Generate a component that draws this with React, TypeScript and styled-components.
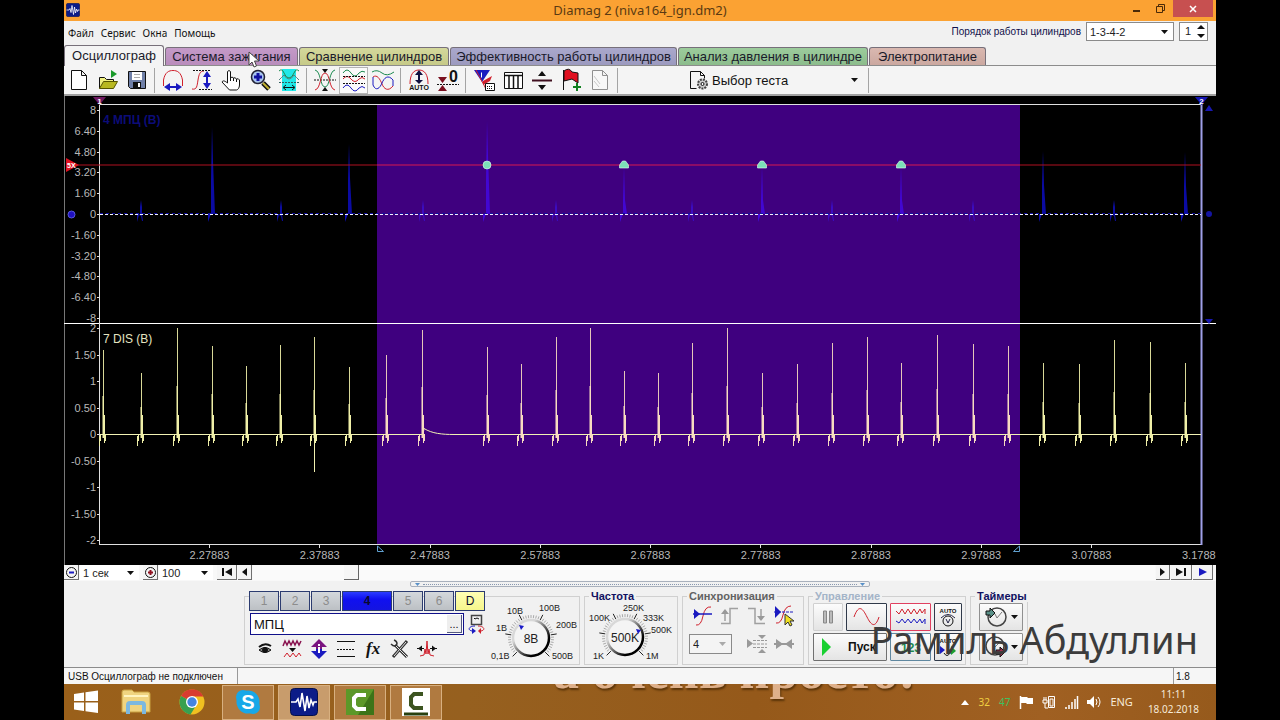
import React from "react";
import styled, { createGlobalStyle } from "styled-components";

const ui = `"Liberation Sans", Arial, sans-serif`;
const tahoma = `"Noto Sans", "Open Sans", sans-serif`;

const GlobalStyle = createGlobalStyle`
  * { box-sizing: border-box; }
  body { margin: 0; background: #000; font-family: ${ui}; font-size: 11px; color: #111; }
  button, input, select { font: inherit; color: inherit; margin: 0; }
  svg { display: block; flex: none; }
`;

const Screen = styled.div`
  position: relative;
  padding: 0 5%;
  background: #000;
`;
const Window = styled.main`
  background: #f1f1f1;
  display: flex;
  flex-direction: column;
`;

/* ---------- title bar ---------- */
const TitleBar = styled.header`
  display: grid;
  grid-template-columns: 1fr auto 1fr;
  height: 21px;
  background: #fba233;
`;
const AppMark = styled.div`
  padding: 3px 2px;
`;
const Title = styled.h1`
  margin: 0;
  font: 13px/21px ${tahoma};
  color: #5a3a12;
`;
const WindowButtons = styled.div`
  display: flex;
  justify-content: flex-end;
  padding-right: 3px;
`;
const WindowButton = styled.button<{ $close?: boolean }>`
  display: flex;
  align-items: center;
  justify-content: center;
  width: ${(p) => (p.$close ? 40 : 24)}px;
  height: 17px;
  padding: 0;
  border: 0;
  background: ${(p) => (p.$close ? "#c75050" : "transparent")};
`;

/* ---------- menu ---------- */
const MenuRow = styled.div`
  display: flex;
  justify-content: space-between;
  height: 24px;
  padding: 0 8px 0 4px;
`;
const Menu = styled.nav`
  display: flex;
  gap: 7px;
`;
const MenuItem = styled.button`
  padding: 0;
  border: 0;
  background: none;
  font: 10px/22px ${tahoma};
`;
const OrderField = styled.div`
  display: flex;
  align-items: flex-start;
  gap: 5px;
  padding-top: 1px;
  color: #10104a;
  line-height: 19px;
  label { font-size: 10px; }
`;
const SelectWrap = styled.div<{ $w: number; $h: number; $plain?: boolean; $muted?: boolean }>`
  position: relative;
  width: ${(p) => p.$w}px;
  height: ${(p) => p.$h}px;
  background: ${(p) => (p.$muted ? "#f4f4f4" : "#fff")};
  border: ${(p) => (p.$plain ? "0" : "1px solid #8a8a8a")};
  color: #222;
  svg { position: absolute; right: 5px; top: calc(50% - 2px); pointer-events: none; }
  select {
    display: block;
    width: 100%;
    height: 100%;
    padding: 0 3px;
    border: 0;
    background: transparent;
    appearance: none;
  }
`;
const Spinner = styled.div`
  display: flex;
  align-items: center;
  width: 29px;
  height: 19px;
  padding: 0 5px;
  background: #fff;
  border: 1px solid #8a8a8a;
  input { width: 12px; padding: 0; border: 0; background: none; color: #222; }
`;

/* ---------- tabs ---------- */
const Tabs = styled.div`
  position: relative;
  display: flex;
  align-items: flex-end;
  gap: 1px;
  height: 21px;
  border-bottom: 1px solid #8c8c8c;
`;
const Tab = styled.button<{ $w: number; $bg: string; $on?: boolean }>`
  width: ${(p) => p.$w}px;
  height: ${(p) => (p.$on ? 21 : 18)}px;
  margin-bottom: ${(p) => (p.$on ? -1 : 0)}px;
  padding: 0;
  border: 1px solid #77707a;
  border-bottom: 0;
  border-radius: 3px 3px 0 0;
  background: ${(p) => p.$bg};
  font-size: 13px;
  line-height: 16px;
  white-space: nowrap;
  color: #1a1a2a;
`;
const Pointer = styled.svg`
  position: absolute;
  left: 184px;
  top: 6px;
`;

/* ---------- toolbar ---------- */
const Toolbar = styled.div`
  display: flex;
  align-items: center;
  height: 30px;
  background: #f4f4f4;
  border-bottom: 2px solid #a0a0a0;
`;
const ToolButton = styled.button<{ $on?: boolean }>`
  display: flex;
  align-items: center;
  justify-content: center;
  width: 29px;
  height: 27px;
  padding: 0;
  border: 1px solid ${(p) => (p.$on ? "#b4b4b4" : "transparent")};
  background: ${(p) => (p.$on ? "#fafafa" : "none")};
`;
const Divider = styled.i`
  width: 1px;
  height: 25px;
  margin: 0 3px;
  background: #a4a4a4;
`;
const TestButton = styled.button`
  display: flex;
  align-items: center;
  gap: 3px;
  width: 180px;
  margin-left: 64px;
  padding: 0 7px 0 4px;
  border: 0;
  background: none;
  font-size: 13px;
  svg:last-child { margin-left: auto; }
`;

const Plot = styled.svg`
  width: 100%;
  height: auto;
  background: #000;
`;

/* ---------- time navigation ---------- */
const NavRow = styled.div`
  display: flex;
  height: 16px;
  gap: 1px;
  background: #f8f8f8;
`;
const NavButton = styled.button<{ $w: number }>`
  display: flex;
  align-items: center;
  justify-content: center;
  width: ${(p) => p.$w}px;
  height: 15px;
  padding: 0;
  border: solid #707070;
  border-width: 0 1px 1px 0;
  background: #f4f4f4;
`;
const Gap = styled.i`
  width: 2px;
`;
const Scroll = styled.input`
  flex: 1;
  min-width: 0;
  height: 15px;
  appearance: none;
  background: #fafafa;
  &::-webkit-slider-thumb {
    appearance: none;
    width: 15px;
    height: 15px;
    background: #f6f6f6;
    border: solid #666;
    border-width: 0 1px 1px 0;
  }
`;
const Splitter = styled.div`
  display: flex;
  align-items: center;
  justify-content: space-between;
  align-self: center;
  width: 40%;
  height: 6px;
  padding: 0 4px;
  border: 1px solid #a8b0bc;
  border-radius: 2px;
  i { flex: 1; margin: 0 3px; border-top: 1px dotted #8898b0; }
`;

/* ---------- control panel ---------- */
const Panels = styled.section`
  display: flex;
  justify-content: center;
  gap: 4px;
  height: 80px;
  padding: 3px 8px 2px 0;
`;
const Group = styled.fieldset<{ $w: number; $tone?: string }>`
  width: ${(p) => p.$w}px;
  min-width: 0;
  margin: 0;
  padding: 0;
  border: 1px solid #d0d0d0;
  legend {
    height: 12px;
    margin-left: 4px;
    padding: 0 2px;
    font-weight: bold;
    line-height: 12px;
    color: ${(p) => p.$tone ?? "#101060"};
  }
`;
const ChannelGroup = styled.section`
  display: flex;
  width: 336px;
  margin-top: 6px;
  border: 1px solid #d0d0d0;
`;
const ChannelColumn = styled.div`
  width: 240px;
  margin-top: -6px;
  padding-left: 4px;
`;
const ChannelButtons = styled.div`
  display: flex;
  gap: 1px;
`;
const ChannelButton = styled.button<{ $tone?: "active" | "d" }>`
  width: ${(p) => (p.$tone === "active" ? 50 : 30)}px;
  height: 20px;
  padding: 0;
  font-size: 12px;
  border: 1px solid #2c3c70;
  font-weight: ${(p) => (p.$tone === "active" ? "bold" : "normal")};
  color: ${(p) => (p.$tone ? "#0a0a30" : "#8c8c8c")};
  background: ${(p) => (p.$tone === "active" ? "linear-gradient(#2a3cff, #1010f0 40%, #1414e0)" : p.$tone === "d" ? "linear-gradient(#ffffb4, #f6f68c)" : "linear-gradient(#d4d8dc, #bcc0c4)")};
`;
const NameRow = styled.div`
  display: flex;
  align-items: center;
  gap: 4px;
  margin: 2px 0 0 1px;
`;
const NameBox = styled.div`
  display: flex;
  width: 217px;
  height: 22px;
  padding: 1px;
  background: #fff;
  border: 1px solid #10108a;
  input { flex: 1; min-width: 0; padding: 0 2px; border: 0; background: none; font-size: 13px; }
  button { width: 15px; padding: 0; border: solid #555a80; border-width: 0 1px 1px 0; background: #eee; line-height: 12px; }
`;
const ChannelTools = styled.div`
  display: flex;
  padding: 1px 0 0 2px;
  button { width: 27px; height: 25px; }
`;
const KnobSlot = styled.div`
  margin-top: -6px;
`;
const SyncGrid = styled.div`
  display: grid;
  grid-template-columns: repeat(4, 27px);
  grid-template-rows: 28px 28px;
  justify-content: center;
  align-items: center;
  justify-items: center;
`;
const IconButton = styled.button`
  padding: 0;
  border: 0;
  background: none;
`;
const SpanTwo = styled.div`
  grid-column: span 2;
  justify-self: start;
`;
const ControlGrid = styled.div`
  display: grid;
  grid-template-columns: 30px 41px 41px 28px;
  grid-auto-rows: 28px;
  column-gap: 3px;
  row-gap: 2px;
  padding: 1px 0 0 4px;
`;
const TimerGrid = styled.div`
  display: grid;
  grid-template-columns: 44px;
  grid-auto-rows: 28px;
  row-gap: 2px;
  padding: 1px 0 0 8px;
`;
const PanelButton = styled.button<{ $edge?: string; $wide?: boolean }>`
  display: flex;
  align-items: center;
  justify-content: ${(p) => (p.$wide ? "flex-start" : "center")};
  gap: ${(p) => (p.$wide ? 16 : 4)}px;
  grid-column: ${(p) => (p.$wide ? "span 2" : "auto")};
  padding: ${(p) => (p.$wide ? "0 0 0 8px" : "0")};
  border: 1px solid ${(p) => p.$edge ?? "#303a4a"};
  border-radius: 1px;
  background: linear-gradient(#fcfcfc, #e4e4e4);
  font-size: 12px;
  font-weight: bold;
`;

/* ---------- status bar ---------- */
const StatusBar = styled.footer`
  display: flex;
  height: 17px;
  border-top: 1px solid #8c8c8c;
  background: #f6f6f6;
  font-size: 10px;
  line-height: 17px;
  span { padding: 0 4px; }
  span:first-child { width: 173px; white-space: nowrap; }
  span:nth-child(2) { flex: 1; border-left: 1px solid #999; }
  span:last-child { width: 43px; padding: 0 2px; border-left: 1px solid #999; }
`;

/* ---------- taskbar ---------- */
const Taskbar = styled.nav`
  position: relative;
  overflow: hidden;
  display: flex;
  align-items: center;
  height: 36px;
  background: linear-gradient(90deg, #9a601a, #96601f 35%, #95591a 60%, #a06022 85%, #965a1c);
`;
const Wallpaper = styled.div`
  position: absolute;
  left: 489px;
  top: -41px;
  font: bold 52px/56px "Liberation Serif", serif;
  color: #deb08a;
  text-shadow: 1px 2px 2px #5a3408;
  white-space: nowrap;
`;
const TaskButton = styled.button<{ $state?: "open" | "front"; $start?: boolean }>`
  display: flex;
  align-items: center;
  justify-content: center;
  width: ${(p) => (p.$start ? 44 : 52)}px;
  height: 35px;
  margin: 0 ${(p) => (p.$start ? 0 : 2)}px;
  padding: 0;
  border: ${(p) => (p.$state ? "1px solid #d8b080" : "0")};
  background: ${(p) => (p.$state === "front" ? "#c89c6c" : p.$state ? "#b07a40" : "none")};
`;
const Tray = styled.div`
  display: flex;
  align-items: center;
  gap: 9px;
  margin-left: auto;
  padding-right: 17px;
  color: #f6ead8;
  font: 11px/16px ${tahoma};
`;
const Temp = styled.span<{ $c: string }>`
  color: ${(p) => p.$c};
  font-size: 10px;
`;
const Clock = styled.time`
  margin-left: 6px;
  font-size: 10px;
  line-height: 15px;
  text-align: center;
`;
const Watermark = styled.div`
  position: absolute;
  right: 82px;
  bottom: 57px;
  font: 38px/48px ${tahoma};
  color: #3c3c3c;
  white-space: nowrap;
  pointer-events: none;
`;

/* ---------- icons ---------- */
type IconProps = { w?: number; h?: number; children: React.ReactNode };
const Icon = ({ w = 22, h = 22, children }: IconProps) => (
  <svg width={w} height={h} viewBox={`0 0 ${w} ${h}`} fill="none" stroke="#111" overflow="visible" aria-hidden="true">{children}</svg>
);
const Down = ({ c = "#111" }: { c?: string }) => (
  <svg width="7" height="4" viewBox="0 0 7 4" aria-hidden="true"><path d="M0 0h7L3.500 4z" fill={c} /></svg>
);
const R = "#d0202c";
const G = "#1c8a50";
const B = "#1a1ac0";

const icons = {
  file: <Icon><path d="M3.500 1.500h10l5 5v14h-15zM13.500 1.500v5h5" fill="#fff" /></Icon>,
  open: <Icon><path d="M2.500 19.500v-11h5l2 2h7v3" fill="#f0f080" /><path d="M2.500 19.500l4-7h14l-4 7z" fill="#b8b820" stroke="#555500" /><path d="M14 1v8l6-4z" fill="#1a9a2a" stroke="none" /></Icon>,
  save: <Icon><path d="M2.500 2.500h17v17h-15l-2-2z" fill="#7080a8" /><path d="M6 3h10v8H6z" fill="#fff" stroke="none" /><path d="M8 5.500h6M8 8.500h6" stroke="#aaa" /><path d="M7 13h8v6H7z" fill="#111" stroke="none" /><path d="M12 14h2v4h-2z" fill="#fff" stroke="none" /></Icon>,
  period: <Icon><path d="M1.500 17V11C3 3 7 1.500 11 1.500S19 3 20.500 11v6" stroke={R} /><path d="M6 18h10" stroke={B} strokeWidth="2" /><path d="M2 18l6-4v8zM20 18l-6-4v8z" fill={B} stroke="none" /></Icon>,
  amplitude: <Icon><path d="M1 20c5 1 5-3 6-9s2-9 6-9" stroke={R} /><path d="M2 1.500h18M8 20.500h13" strokeDasharray="2 1" /><path d="M16 6v10" stroke={B} strokeWidth="2" /><path d="M16 2l-4 6h8zM16 20l-4-6h8z" fill={B} stroke="none" /></Icon>,
  hand: <Icon><path d="M7.500 14V2.500q1.500-2 3 0V9q1.500-2 3 0 1.500-1 3 1 2-1 3 1v5c0 3-2 5-3 5h-7L2 13c1-2 3-1 5.500 1M10.500 9v3M13.500 9v3M16.500 10v3" fill="#fff" /></Icon>,
  zoom: <Icon><path d="M14 14l6 6" stroke="#111" strokeWidth="5" /><path d="M14 14l6 6" stroke="#c0b030" strokeWidth="2" /><circle cx="9" cy="8" r="6.500" fill="#a8c4f0" stroke="#223" strokeWidth="1.500" /><path d="M5 8h8M9 4v8" stroke="#1010a0" strokeWidth="3" /></Icon>,
  region: <Icon><path d="M4 0h14v22H4z" fill="#20e8e8" stroke="none" /><path d="M1 2q3-3 5 2t5 5 5-5 5-2" stroke={G} /><path d="M1 11q3-3 5-5 5 8 10 0 2 2 5 5" stroke="#508080" /><path d="M1 13.500h20" stroke="#306060" strokeDasharray="2 1" /><path d="M6 18.500h10M8 16l-3 2.500 3 2.500M14 16l3 2.500-3 2.500" /></Icon>,
  cross: <Icon><path d="M0 11h22" strokeDasharray="2 1" /><path d="M1 1c6 1 5 17 10 17S15 2 21 1" stroke={G} /><path d="M1 21C7 20 6 4 11 4s4 16 10 17" stroke={R} /><path d="M8 0h6l-3 4zM8 22h6l-3-4z" fill="#111" stroke="none" /></Icon>,
  layers: <Icon><path d="M0 4q4-6 8 0t8 0q3-3 6-1" stroke={G} /><path d="M0 10q4-5 8 0t8 0q3-3 6 0" stroke={R} /><path d="M0 19q4-6 8 0t8 0q3-3 6 0" stroke={B} /><path d="M0 7.500h22M0 14.500h22" strokeDasharray="2 1" /></Icon>,
  overlay: <Icon><path d="M0 3q5-3 10 1t12-1" stroke={G} /><path d="M1 8c4-3 7 2 9 7s6 8 11 2" stroke={R} /><path d="M1 8v8c3 7 7 3 9-2s6-9 11-3v6" stroke={B} /></Icon>,
  auto: <Icon><path d="M2 15C2 6 5 1 11 1s9 5 9 14" stroke={R} /><path d="M11 4v9" strokeWidth="2" stroke="#101040" /><path d="M11 1L7 6h8zM11 15l-4-4h8z" fill="#101040" stroke="none" /><text x="11" y="21" fontSize="7" fontWeight="bold" textAnchor="middle" fill="#111" stroke="none">AUTO</text></Icon>,
  zero: <Icon><path d="M1 8h9l-4.500 6zM1 22h9l-4.500-6z" fill="#7a1020" stroke="none" /><path d="M0 15.500h22" strokeDasharray="2 1" /><text x="12" y="13" fontSize="16" fontWeight="bold" fill="#111" stroke="none">0</text></Icon>,
  trigger: <Icon><path d="M1 1h16l-8 12z" fill={B} stroke="none" /><path d="M8.500 3.500v5" stroke="#fff" /><path d="M10 12l9-5-2 5-7 4z" fill={R} stroke="none" /><path d="M3 1l10 19" stroke={R} /><path d="M12.500 14.500h9v7h-9z" fill="#fff" /><path d="M14 17.500h6M14 19.500h6" strokeDasharray="1 1" /></Icon>,
  table: <Icon><path d="M2.500 3.500h18v16h-18z" fill="#fff" /><path d="M2 6.500h19M7 6v13M11.500 6v13M16 6v13" strokeWidth="1.500" /></Icon>,
  split: <Icon><path d="M1 11.500h20" strokeWidth="2" stroke="#401020" /><path d="M7 7h8l-4-5zM7 16h8l-4 5z" fill="#111" stroke="none" /></Icon>,
  flag: <Icon><path d="M3.500 1v20" /><path d="M4 2q5-4 8 1l6 1v10l-6-4-8 2z" fill="#e01020" /><path d="M17 14v8M13 18h8" stroke="#108020" strokeWidth="2" /></Icon>,
  report: <Icon><path d="M3.500 1.500h10l5 5v14h-15zM13.500 1.500v5h5" fill="#f8f8f8" stroke="#909090" /><path d="M5 7l6 8M5 12l5 6" stroke="#c8c8c8" /></Icon>,
};

const tools: [string, keyof typeof icons][][] = [
  [["Новый", "file"], ["Открыть", "open"], ["Сохранить", "save"]],
  [["Период", "period"], ["Амплитуда", "amplitude"], ["Рука", "hand"], ["Масштаб", "zoom"], ["Фрагмент", "region"]],
  [["Совместить", "cross"], ["Раздельно", "layers"], ["Наложить", "overlay"]],
  [["Автомасштаб", "auto"], ["Ноль", "zero"]],
  [["Синхрометка", "trigger"], ["Таблица", "table"], ["Разделить", "split"], ["Закладка", "flag"], ["Отчёт", "report"]],
];

const tabs: [string, number, string][] = [
  ["Осциллограф", 100, "#f4f4f4"],
  ["Система зажигания", 133, "linear-gradient(#c49ac8, #b98cbc)"],
  ["Сравнение цилиндров", 150, "linear-gradient(#d4d89c, #c6ca88)"],
  ["Эффективность работы цилиндров", 227, "linear-gradient(#aaa8cc, #9c9abf)"],
  ["Анализ давления в цилиндре", 190, "linear-gradient(#9ccc9c, #8cbc8c)"],
  ["Электропитание", 117, "linear-gradient(#dab8b0, #cba8a0)"],
];

/* ---------- oscillogram ---------- */
const WHITE = "#e0e0e0";
const dis: [number, number][] = [
  [103, 350], [141, 373], [177, 328], [212, 346], [246, 366], [280, 345], [314, 337], [349, 367], [386, 355], [422, 330],
  [487, 347], [521, 364], [556, 337], [590, 328], [624, 371], [658, 373], [692, 343], [727, 328], [762, 373], [797, 364],
  [832, 343], [867, 337], [901, 363], [937, 335], [973, 344], [1008, 346], [1043, 363], [1079, 364], [1114, 340],
  [1150, 342], [1185, 363],
];
const mpcPeaks: [number, number][] = [
  [212, 127], [349, 144], [487, 121], [624, 166], [762, 166], [901, 166], [1043, 151], [1185, 152],
];
const mpcRipples = [141, 281, 423, 556, 692, 832, 973, 1114];
const inWindow = (x: number) => x > 377 && x < 1020;

const Oscillogram = () => (
  <Plot viewBox="64 96 1152 469" role="img" aria-label="Осциллограмма" fontFamily='"Liberation Sans", Arial, sans-serif' fontSize="11">
    <rect x="377" y="105" width="643" height="440" fill="#3f007f" />
    <path d="M64.500 96V565" stroke="#777" />
    <path d="M99 104.500H1201M99 544.500H1201" stroke={WHITE} />
    <path d="M64 323.500H1216" stroke="#fff" />
    <path d="M99.500 104V545" stroke={WHITE} />
    <path d="M1201.500 104V545" stroke="#a0a0e8" strokeWidth="2" />
    <g fill="#b8b8b8" textAnchor="end">
      {["8", "6.40", "4.80", "3.20", "1.60", "0", "-1.60", "-3.20", "-4.80", "-6.40", "-8"].map((t, i) => (
        <React.Fragment key={t}>
          <text x="96" y={114 + i * 20.8}>{t}</text>
          <path d={`M97 ${Math.round(110 + i * 20.8)}.5h3`} stroke={WHITE} />
        </React.Fragment>
      ))}
      {["2", "1.50", "1", "0.50", "0", "-0.50", "-1", "-1.50", "-2"].map((t, i) => (
        <React.Fragment key={t}>
          <text x="96" y={332 + i * 26.5}>{t}</text>
          <path d={`M97 ${Math.round(328 + i * 26.5)}.5h3`} stroke={WHITE} />
        </React.Fragment>
      ))}
    </g>
    <g fill="#b8b8b8" textAnchor="middle">
      {["2.27883", "2.37883", "2.47883", "2.57883", "2.67883", "2.77883", "2.87883", "2.97883", "3.07883"].map((t, i) => (
        <React.Fragment key={t}>
          <text x={209.500 + i * 110.25} y="559">{t}</text>
          <path d={`M${Math.round(209 + i * 110.25)}.5 545v3`} stroke={WHITE} />
        </React.Fragment>
      ))}
      <text x="1182" y="559" textAnchor="start">3.1788</text>
    </g>

    <text x="103" y="124" fontSize="12" fontWeight="bold" fill="#0c0c78">4 МПЦ (В)</text>
    <text x="103" y="343" fontSize="12" fill="#e4e4c0">7 DIS (В)</text>

    {mpcPeaks.map(([x, y]) => (
      <g key={x} stroke="none" fill={inWindow(x) ? "#4208dc" : "#0c0cb4"}>
        <path d={`M${x - 1} 214V${Math.max(y + 34, 180)}L${x} ${y}L${x + 1} ${y + 34}L${x + 3} 214z`} opacity=".9" />
        <path d={`M${x - 4} 222v-8h3z`} />
      </g>
    ))}
    {mpcRipples.map((x) => (
      <path key={x} d={`M${x - 4} 222V214h3v-7l1-7l1 7v7l1 7h-1l-1-5l-2-1z`} fill={inWindow(x) ? "#3c0cc0" : "#0c0ca0"} />
    ))}
    <path d="M100 213.500H1201" stroke="#1010a0" strokeDasharray="3 3" />
    <path d="M100 214.500H1201" stroke="#f0f0ff" strokeDasharray="3 2" />
    <path d="M76 165H1201" stroke="#b01020" strokeWidth="1" />
    <path d="M377 165H1020" stroke="#a01080" strokeWidth="1" />
    {[487, 624, 762, 901].map((x, i) => (
      <path key={x} d={i ? `M${x - 4.500} 168v-3l3-4h3l3 4v3z` : `M${x - 4} 165a4 4 0 1 0 8 0a4 4 0 1 0-8 0`} fill="#7ce0b8" stroke="#e0fff0" strokeWidth=".6" />
    ))}

    <path d="M100 434.500H423l1-6c8 5 18 6 30 6H1201" stroke="#f2f2b4" fill="none" />
    {dis.map(([x, y]) => {
      const c = inWindow(x) ? "#f8dcc0" : "#f0f0a8";
      return (
        <g key={x}>
          <path d={`M${x + 0.500} ${y}V434`} stroke={c} strokeOpacity=".9" fill="none" />
          <path d={`M${x - 0.5} 436V${Math.round(y + (434 - y) * 0.550)}h1.500V415h1v28h-1v-5h-1.500z`} fill={c} />
          <path d={`M${x - 3.500} 446v-10M${x - 2.500} 441v-6M${x + 2.500} 441v-7`} stroke={c} fill="none" />
        </g>
      );
    })}
    <path d="M314.500 434V472" stroke="#f0f0b0" />

    <path d="M93 97h13l-6.500 8z" fill="#6c1860" />
    <text x="99.500" y="104" fontSize="8" fontWeight="bold" textAnchor="middle" fill="#fff">1</text>
    <path d="M1195 97h13l-6.500 8z" fill="#1414b0" />
    <text x="1201.500" y="104" fontSize="8" fontWeight="bold" textAnchor="middle" fill="#fff">2</text>
    <path d="M66 158l13 7-13 7z" fill="#e01020" />
    <text x="67" y="168" fontSize="7" fontWeight="bold" fill="#fff">5X</text>
    <circle cx="71.500" cy="214.500" r="3.500" fill="#2010c0" stroke="#5858e0" />
    <circle cx="1209" cy="214" r="3" fill="#1414a0" />
    <path d="M1205 111h8l-4-6zM1205 319h8l-4 5z" fill="#1818b0" />
    <path d="M377.500 546v5.500h6zM1019.500 546v5.500h-6z" fill="none" stroke="#60a0d0" />
  </Plot>
);

/* ---------- knobs ---------- */
type KnobProps = { w: number; cx: number; value: string; pointer: [number, number]; marks: [string, number, number][] };
const Knob = ({ w, cx, value, pointer, marks }: KnobProps) => {
  const ticks = Array.from({ length: 41 }, (_, i) => (-225 + i * 6.75) * (Math.PI / 180));
  const id = `knob-${w}`;
  return (
    <svg width={w} height="68" viewBox={`0 0 ${w} 68`} role="img" aria-label={value} fontFamily='"Liberation Sans", Arial, sans-serif'>
      <defs>
        <linearGradient id={id} x1="0" y1="0" x2="1" y2="1">
          <stop offset=".3" stopColor="#d8d8d8" /><stop offset=".75" stopColor="#000" />
        </linearGradient>
      </defs>
      {ticks.map((a, i) => {
        const o = i % 8 === 0 ? 26 : 23;
        return <path key={i} d={`M${cx + 20 * Math.cos(a)} ${41 + 20 * Math.sin(a)}L${cx + o * Math.cos(a)} ${41 + o * Math.sin(a)}`} stroke={i % 8 === 0 ? "#222" : "#aaa"} />;
      })}
      <circle cx={cx} cy="41" r="18" fill="#f4f4f4" stroke={`url(#${id})`} strokeWidth="2.500" />
      <path d={`M${pointer[0] - 2} ${pointer[1] - 2}l5 1-3 4z`} fill="#1a1ac8" />
      <text x={cx} y="46" fontSize="12" textAnchor="middle" fill="#222">{value}</text>
      {marks.map(([t, x, y]) => <text key={t} x={x} y={y} fontSize="9" fill="#222">{t}</text>)}
    </svg>
  );
};

const WaveMark = ({ size }: { size: number }) => (
  <svg width={size} height={size} viewBox="0 0 28 28" aria-hidden="true">
    <rect x=".5" y=".5" width="27" height="27" rx="4" fill="#0c1c88" stroke="#04104c" />
    <path d="M1 14h5l2-3 2 8 2-14 3 18 2-15 2 12 2-8 2 5 1-3h3" fill="none" stroke="#fff" strokeWidth="1.600" />
  </svg>
);

export default function App() {
  return (
    <Screen>
      <GlobalStyle />
      <Window>
        <TitleBar>
          <AppMark><WaveMark size={14} /></AppMark>
          <Title>Diamag 2 (niva164_ign.dm2)</Title>
          <WindowButtons>
            <WindowButton aria-label="Свернуть"><Icon w={8} h={8}><path d="M0 6h7" stroke="#4a2a08" strokeWidth="2" /></Icon></WindowButton>
            <WindowButton aria-label="Развернуть"><Icon w={10} h={10}><path d="M.5 2.500h6v6h-6zM2.500 2V.5h6v6H7" stroke="#4a2a08" /></Icon></WindowButton>
            <WindowButton aria-label="Закрыть" $close><Icon w={8} h={8}><path d="M1 1l6 6M7 1L1 7" stroke="#fff" strokeWidth="1.500" /></Icon></WindowButton>
          </WindowButtons>
        </TitleBar>

        <MenuRow>
          <Menu>{["Файл", "Сервис", "Окна", "Помощь"].map((m) => <MenuItem key={m}>{m}</MenuItem>)}</Menu>
          <OrderField>
            <label htmlFor="order">Порядок работы цилиндров</label>
            <SelectWrap $w={88} $h={19}><select id="order"><option>1-3-4-2</option></select><Down /></SelectWrap>
            <Spinner>
              <input aria-label="Цилиндр" defaultValue="1" />
              <Icon w={8} h={13}><path d="M0 4h8L4 0zM0 9h8l-4 4z" fill="#111" stroke="none" /></Icon>
            </Spinner>
          </OrderField>
        </MenuRow>

        <Tabs role="tablist">
          {tabs.map(([name, w, bg], i) => <Tab key={name} role="tab" aria-selected={i === 0} $w={w} $bg={bg} $on={i === 0}>{name}</Tab>)}
          <Pointer width="12" height="18" viewBox="0 0 12 18" aria-hidden="true">
            <path d="M1 1v13l3-3 2 5 2.500-1-2-5H11z" fill="#fff" stroke="#444" />
          </Pointer>
        </Tabs>

        <Toolbar>
          {tools.map((group, g) => (
            <React.Fragment key={g}>
              {group.map(([name, icon]) => <ToolButton key={name} aria-label={name} $on={icon === "layers"}>{icons[icon]}</ToolButton>)}
              <Divider />
            </React.Fragment>
          ))}
          <TestButton>
            <Icon w={20} h={20}>
              <path d="M1.500 1.500h10l4 4v3M1.500 1.500v17h6M11.500 1.500v4h4" />
              <circle cx="13.500" cy="14" r="4.500" strokeDasharray="2 1" strokeWidth="2" stroke="#444" fill="#ccc" />
              <circle cx="13.500" cy="14" r="1.500" fill="#fff" />
            </Icon>
            Выбор теста
            <Down />
          </TestButton>
          <Divider />
        </Toolbar>

        <Oscillogram />

        <NavRow>
          <NavButton $w={15} aria-label="Сжать"><Icon w={13} h={13}><circle cx="6.500" cy="6.500" r="5" /><path d="M4 6.500h5" stroke={B} strokeWidth="2" /></Icon></NavButton>
          <SelectWrap $w={59} $h={15} $plain><select aria-label="Развёртка"><option>1 сек</option></select><Down /></SelectWrap>
          <Gap />
          <NavButton $w={15} aria-label="Растянуть"><Icon w={13} h={13}><circle cx="6.500" cy="6.500" r="5" /><path d="M4 6.500h5M6.500 4v5" stroke="#901020" strokeWidth="2" /></Icon></NavButton>
          <SelectWrap $w={54} $h={15} $plain><select aria-label="Масштаб, %"><option>100</option></select><Down /></SelectWrap>
          <Gap />
          <NavButton $w={20} aria-label="В начало"><Icon w={10} h={8}><path d="M1 0v8" strokeWidth="2" /><path d="M10 0v8L3 4z" fill="#111" stroke="none" /></Icon></NavButton>
          <NavButton $w={14} aria-label="Назад"><Icon w={5} h={8}><path d="M5 0v8L0 4z" fill="#111" stroke="none" /></Icon></NavButton>
          <Scroll type="range" aria-label="Положение" min={0} max={1000} defaultValue={103} />
          <NavButton $w={14} aria-label="Вперёд"><Icon w={5} h={8}><path d="M0 0v8l5-4z" fill="#111" stroke="none" /></Icon></NavButton>
          <NavButton $w={21} aria-label="В конец"><Icon w={10} h={8}><path d="M9 0v8" strokeWidth="2" /><path d="M0 0v8l7-4z" fill="#111" stroke="none" /></Icon></NavButton>
          <NavButton $w={20} aria-label="Прокрутка"><Icon w={8} h={8}><path d="M0 0v8l8-4z" fill={B} stroke="none" /></Icon></NavButton>
          <Gap />
        </NavRow>

        <Splitter>
          <Icon w={5} h={3}><path d="M0 0h5L2.500 3z" fill="#5890c8" stroke="none" /></Icon>
          <i />
          <Icon w={5} h={3}><path d="M0 0h5L2.500 3z" fill="#5890c8" stroke="none" /></Icon>
        </Splitter>

        <Panels>
          <ChannelGroup aria-label="Каналы">
            <ChannelColumn>
              <ChannelButtons>
                {["1", "2", "3", "4", "5", "6", "D"].map((c) => (
                  <ChannelButton key={c} $tone={c === "4" ? "active" : c === "D" ? "d" : undefined}>{c}</ChannelButton>
                ))}
              </ChannelButtons>
              <NameRow>
                <NameBox><input aria-label="Имя канала" defaultValue="МПЦ" /><button aria-label="Выбрать">...</button></NameBox>
                <Icon w={17} h={20}>
                  <path d="M3.500 1.500h10v9h-10z" strokeWidth="1.500" stroke="#444" /><path d="M6 4l1 1 2-1 2 1" />
                  <path d="M7 12c-6 0-8 4-3 5" stroke={B} /><path d="M4 14l4 3-4 3z" fill={B} stroke="none" />
                  <path d="M10 12c6 0 8 4 3 5" stroke={R} /><path d="M13 14l-3 3 3 3z" fill={R} stroke="none" />
                </Icon>
              </NameRow>
              <ChannelTools>
                <ToolButton aria-label="Показать"><Icon w={18} h={18}><path d="M3 7q6-5 12-1" strokeWidth="2" /><path d="M3 10q6-5 12 0-6 5-12 0z" fill="#888" /><circle cx="9" cy="10" r="2.500" fill="#111" /></Icon></ToolButton>
                <ToolButton aria-label="Фильтр"><Icon w={20} h={20}><path d="M1 7l2-5 2 4 2-4 2 4 2-4 2 4 2-4 2 4 2-4" stroke="#8a1450" strokeWidth="1.500" /><path d="M7 9h7l-3.500 4z" fill="#111" stroke="none" /><path d="M2 18l3-4 3 4 3-4 3 4 3-4 2 3" stroke={R} /></Icon></ToolButton>
                <ToolButton aria-label="Инверсия"><Icon w={20} h={20}><path d="M10 0L2 8h5v2h6V8h5z" fill="#7a1480" stroke="none" /><path d="M10 20l-8-8h5v-2h6v2h5z" fill={B} stroke="none" /><path d="M10 5v2M10 8v6" stroke="#fff" strokeWidth="2" /></Icon></ToolButton>
                <ToolButton aria-label="Уровни"><Icon w={20} h={20}><path d="M1 2.500h18M1 17.500h18" /><path d="M1 10.500h18" strokeDasharray="2 1" /></Icon></ToolButton>
                <ToolButton aria-label="Функция"><Icon w={20} h={20}><text x="3" y="15" fontFamily="Liberation Serif, serif" fontSize="17" fontStyle="italic" fontWeight="bold" fill="#111" stroke="none">fx</text></Icon></ToolButton>
                <ToolButton aria-label="Настройка"><Icon w={22} h={20}><path d="M6 6l12 12M18 2L4 18" stroke="#333" strokeWidth="3" /><path d="M7 7l11 11M17 3L5 17" stroke="#e4e4e4" /><path d="M2 5q4 4 6 0 0-3-3-4" stroke="#333" strokeWidth="1.500" /></Icon></ToolButton>
                <ToolButton aria-label="Сдвиг"><Icon w={20} h={20}><path d="M3 17l4-1 1-6 1 5 1-13 1 13 1-5 1 6 4 1" stroke={R} /><path d="M0 9.500h7M13 9.500h7" /><path d="M1 9.500l4-3v6zM19 9.500l-4-3v6z" fill="#111" stroke="none" /></Icon></ToolButton>
              </ChannelTools>
            </ChannelColumn>
            <Knob w={94} cx={46} value="8В" pointer={[36, 30]} marks={[["0,1В", 6, 62], ["1В", 11, 34], ["10В", 22, 17], ["100В", 54, 14], ["200В", 71, 31], ["500В", 67, 62]]} />
          </ChannelGroup>

          <Group $w={94}>
            <legend>Частота</legend>
            <KnobSlot>
              <Knob w={92} cx={40} value="500K" pointer={[53, 35]} marks={[["1K", 8, 63], ["100K", 4, 25], ["250K", 38, 15], ["333K", 58, 25], ["500K", 66, 37], ["1M", 61, 63]]} />
            </KnobSlot>
          </Group>

          <Group $w={122} $tone="#626262">
            <legend>Синхронизация</legend>
            <SyncGrid>
              <IconButton aria-label="Уровень"><Icon w={20} h={20}><path d="M3 19q5 1 7-9t8-9" stroke={R} /><path d="M0 8h19" stroke={B} strokeWidth="1.500" /><path d="M1 3v10l6-5z" fill={B} stroke="none" /></Icon></IconButton>
              <IconButton aria-label="Фронт"><Icon w={20} h={20}><path d="M1 17.500h9v-15h8M5 15V7" stroke="#a0a0a0" strokeWidth="1.500" /><path d="M1 8h8L5 3z" fill="#999" stroke="none" /></Icon></IconButton>
              <IconButton aria-label="Спад"><Icon w={20} h={20}><path d="M1 2.500h7v15h10M14 3v8" stroke="#a0a0a0" strokeWidth="1.500" /><path d="M10 10h8l-4 5z" fill="#999" stroke="none" /></Icon></IconButton>
              <IconButton aria-label="Указать"><Icon w={20} h={22}><path d="M2 18q5 1 7-8t8-9" stroke={R} /><path d="M0 7h19" stroke={B} strokeDasharray="3 1" /><path d="M1 1v12l6-6z" fill={B} stroke="none" /><path d="M11 9v11l3-3 2 4 2-1-2-4h4z" fill="#f0e020" stroke="#333" /></Icon></IconButton>
              <SpanTwo>
                <SelectWrap $w={43} $h={20} $muted><select aria-label="Канал синхронизации"><option>4</option></select><Down c="#aaa" /></SelectWrap>
              </SpanTwo>
              <IconButton aria-label="Пределы"><Icon w={22} h={18}><path d="M1 4v9l6-4.500z" fill="#999" stroke="none" /><path d="M7 5.500h14M7 9h14M7 12.500h14" stroke="#999" strokeDasharray="3 1" /><path d="M12 0h8l-4 4zM12 18h8l-4-4z" fill="#999" stroke="none" /></Icon></IconButton>
              <IconButton aria-label="Задержка"><Icon w={20} h={12}><path d="M0 6h20" stroke="#999" strokeWidth="2" /><path d="M2 1v10l7-5zM18 1v10l-7-5z" fill="#999" stroke="none" /></Icon></IconButton>
            </SyncGrid>
          </Group>

          <Group $w={158} $tone="#a4b4c8">
            <legend>Управление</legend>
            <ControlGrid>
              <PanelButton $edge="#d0d0d0" aria-label="Пауза"><Icon w={12} h={14}><path d="M1.500 1h3v12h-3zM7.500 1h3v12h-3z" stroke="#888" fill="#bbb" /></Icon></PanelButton>
              <PanelButton aria-label="Кадр"><Icon w={28} h={20}><path d="M1 10C6-4 10 2 14 10s8 12 12 0" stroke={R} /></Icon></PanelButton>
              <PanelButton $edge="#e04060" aria-label="Запись"><Icon w={30} h={20}><path d="M0 4l3 3 3-5 3 5 3-5 3 5 3-5 3 5 3-5 2 4 3-4v5" stroke={R} /><path d="M0 14l3 2 3-4 3 4 3-4 3 4 3-4 3 4 3-4 2 4 3-4v5" stroke={B} /></Icon></PanelButton>
              <PanelButton aria-label="Авто время"><Icon w={18} h={22}><text x="9" y="7" fontSize="6" fontWeight="bold" textAnchor="middle" fill="#111" stroke="none">AUTO</text><circle cx="9" cy="15" r="5" /><path d="M7 13l2 4 2-4M2 12q7-7 14 0" stroke="#224" /></Icon></PanelButton>
              <PanelButton $wide $edge="#707070"><Icon w={10} h={18}><path d="M0 0v18l9-9z" fill="#18d030" stroke="none" /></Icon>Пуск</PanelButton>
              <PanelButton $edge="#6088a0" aria-label="Счётчик"><Icon w={30} h={16}><text x="15" y="13" fontSize="12" textAnchor="middle" fill={G} stroke="none">123</text></Icon></PanelButton>
              <PanelButton aria-label="Авто пуск"><Icon w={18} h={22}><text x="9" y="7" fontSize="6" fontWeight="bold" textAnchor="middle" fill="#111" stroke="none">AUTO</text><path d="M1 10v8l5-4z" fill={B} stroke="none" /><path d="M12 10v9l5-4z" fill="#18a030" stroke="none" /><path d="M5 17q3 5 6 0" /></Icon></PanelButton>
            </ControlGrid>
          </Group>

          <Group $w={58}>
            <legend>Таймеры</legend>
            <TimerGrid>
              <PanelButton $edge="#909090" aria-label="Таймер начала"><Icon w={22} h={22}><circle cx="12" cy="11" r="9" stroke="#444" strokeWidth="1.500" /><path d="M10 8l2 4 5-6" stroke="#777" /><path d="M1 5h4V2l5 5-5 5V9H1z" fill="#5a9088" /></Icon><Down /></PanelButton>
              <PanelButton $edge="#909090" aria-label="Таймер конца"><Icon w={22} h={22}><circle cx="10" cy="10" r="9" stroke="#444" strokeWidth="1.500" /><path d="M8 7l2 4 5-5" stroke="#777" /><path d="M11 14h4v-3l5 5-5 5v-3h-4z" fill="#a03050" /></Icon><Down /></PanelButton>
            </TimerGrid>
          </Group>
        </Panels>

        <StatusBar><span>USB Осциллограф не подключен</span><span /><span>1.8</span></StatusBar>
      </Window>

      <Taskbar>
        <Wallpaper>а очень просто!</Wallpaper>
        <TaskButton $start aria-label="Пуск Windows"><Icon w={24} h={24}><path d="M0 4l10-1.500V11H0zM11.500 2.300L24 .5V11H11.500zM0 12.500h10V21L0 19.500zM11.500 12.500H24V23l-12.500-1.800z" fill="#fff" stroke="none" /></Icon></TaskButton>
        <TaskButton aria-label="Проводник"><Icon w={30} h={28}><path d="M1 4q0-2 2-2h8l2 2h14q2 0 2 2v18H1z" fill="#f0d480" stroke="#c8a040" /><path d="M3 8h24" stroke="#fff4c0" strokeWidth="2" /><path d="M7 26V17q0-2 2-2h12q2 0 2 2v9" stroke="#7cb8e0" strokeWidth="4" /></Icon></TaskButton>
        <TaskButton aria-label="Chrome"><Icon w={26} h={26}>
          <circle cx="13" cy="13" r="12.500" fill="#f0c020" stroke="none" />
          <path d="M13 13L2 7A12.500 12.500 0 0 1 24.500 7.500H13z" fill="#d83c30" stroke="none" />
          <path d="M13 13L2 7a12.500 12.500 0 0 0 9.500 18.400L18 15z" fill="#38a050" stroke="none" />
          <circle cx="13" cy="13" r="6" fill="#fff" stroke="none" /><circle cx="13" cy="13" r="4.700" fill="#4484e0" stroke="none" />
        </Icon></TaskButton>
        <TaskButton $state="open" aria-label="Skype"><Icon w={28} h={28}><circle cx="14" cy="14" r="11.500" fill="#18a8e8" stroke="none" /><circle cx="9" cy="9" r="7" fill="#18a8e8" stroke="none" /><circle cx="19" cy="19" r="7" fill="#18a8e8" stroke="none" /><text x="14" y="21" fontSize="20" fontWeight="bold" textAnchor="middle" fill="#fff" stroke="none">S</text></Icon></TaskButton>
        <TaskButton $state="front" aria-label="Diamag"><WaveMark size={28} /></TaskButton>
        <TaskButton $state="open" aria-label="Camtasia"><Icon w={28} h={28}><path d="M0 1h28v26H0z" fill="#5c9828" stroke="none" /><path d="M28 1v26H12z" fill="#3c7418" stroke="none" /><path d="M20 7h-9l-3 3v8l3 3h9" stroke="#fff" strokeWidth="4" /></Icon></TaskButton>
        <TaskButton $state="open" aria-label="Camtasia Recorder"><Icon w={28} h={28}><path d="M0 0h28v28H0z" fill="#fff" stroke="none" /><path d="M21 6h-9L9 9v8l3 3h9" stroke="#3c5420" strokeWidth="4" /><path d="M2 26h24" stroke="#284010" strokeWidth="3" /></Icon></TaskButton>
        <Tray>
          <Icon w={8} h={5}><path d="M0 5h8L4 0z" fill="#fff" stroke="none" /></Icon>
          <Temp $c="#f0d040">32</Temp>
          <Temp $c="#40c060">47</Temp>
          <Icon w={14} h={14}><path d="M1.500 1v13" stroke="#fff" strokeWidth="1.500" /><path d="M2 2h6l1 1h5v6H8L7 8H2z" fill="#fff" stroke="none" /></Icon>
          <Icon w={14} h={14}><path d="M6.500 1.500h6v11h-6zM8 4h3v7H8zM1 5h4v3H1zM2 2v3M4 2v3M3 8v5h3" stroke="#fff" /></Icon>
          <Icon w={13} h={13}><path d="M1 13v-2M4 13V9M7 13V6M10 13V3M12.500 13V0" stroke="#fff" strokeWidth="1.500" /></Icon>
          <Icon w={14} h={14}><path d="M0 5h3l4-4v12L3 9H0z" fill="#fff" stroke="none" /><path d="M9 4q2 3 0 6M11 2q4 5 0 10" stroke="#fff" /></Icon>
          <span>ENG</span>
          <Clock>11:11<br />18.02.2018</Clock>
        </Tray>
      </Taskbar>
      <Watermark>Рамиль Абдуллин</Watermark>
    </Screen>
  );
}
